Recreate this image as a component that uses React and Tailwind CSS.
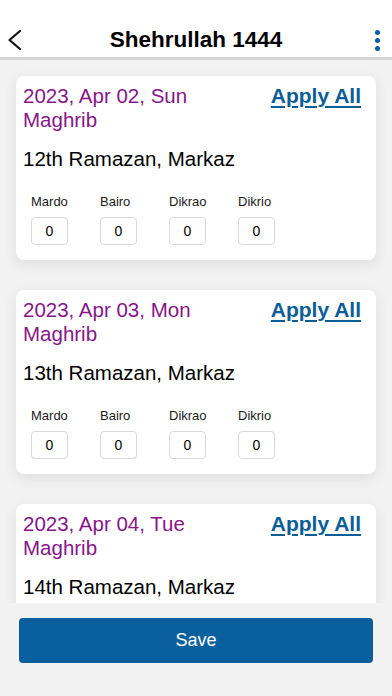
const days = [
  { date: "2023, Apr 02, Sun", hijri: "12th Ramazan, Markaz" },
  { date: "2023, Apr 03, Mon", hijri: "13th Ramazan, Markaz" },
  { date: "2023, Apr 04, Tue", hijri: "14th Ramazan, Markaz" },
];

const fields = ["Mardo", "Bairo", "Dikrao", "Dikrio"];

const DayCard = ({ day }) => {
  return (
    <div className="shrink-0 bg-white rounded-[8px] shadow-[0_4px_14px_rgba(0,0,0,0.09)] pl-[7px] pr-[15px] pt-[8px] pb-[15px]">
      <div className="flex justify-between items-start">
        <p className="text-[20.5px] leading-[24px] text-[#87168a] w-[200px]">
          {day.date}
          <br />
          Maghrib
        </p>
        <button className="text-[21px] leading-[24px] font-bold text-[#0b5d98] underline decoration-2 underline-offset-[3px]">
          Apply All
        </button>
      </div>
      <p className="mt-[15px] text-[20.5px] leading-[24px] text-black">{day.hijri}</p>
      <div className="mt-[23px] pl-[8px] flex">
        {fields.map((f) => (
          <div key={f} className="w-[69px] flex flex-col">
            <label className="text-[13px] leading-[16px] text-[#1a1a1a]">{f}</label>
            <input
              className="mt-[7px] w-[37px] h-[28px] border border-[#d9d9d9] rounded-[4px] text-center text-[14px] text-black outline-none"
              type="text"
              defaultValue="0"
            />
          </div>
        ))}
      </div>
    </div>
  );
};

const App = () => {
  return (
    <div
      className="h-[696px] w-[392px] flex flex-col bg-[#f2f2f2] overflow-hidden"
      style={{ fontFamily: '"Liberation Sans", Arial, sans-serif' }}
    >
      <div className="h-[60px] shrink-0 bg-white border-b-[3px] border-[#d5d5d5] pt-[23px] grid grid-cols-[48px_1fr_48px] items-center">
        <button className="pl-[7px] h-[34px] flex items-center">
          <svg width="15" height="22" viewBox="0 0 15 22" fill="none">
            <polyline
              points="13,2 2.5,11 13,20"
              stroke="#111"
              strokeWidth="2.2"
              strokeLinecap="round"
              strokeLinejoin="round"
            />
          </svg>
        </button>
        <h1 className="text-center text-[22.5px] font-bold text-black leading-[34px]">
          Shehrullah 1444
        </h1>
        <button className="h-[34px] flex flex-col items-end justify-center gap-[3px] pr-[12px]">
          <span className="w-[5px] h-[5px] rounded-full bg-[#0b5d9e]" />
          <span className="w-[5px] h-[5px] rounded-full bg-[#0b5d9e]" />
          <span className="w-[5px] h-[5px] rounded-full bg-[#0b5d9e]" />
        </button>
      </div>

      <div className="flex-1 overflow-hidden px-[16px] pt-[16px] flex flex-col gap-[30px]">
        {days.map((d) => (
          <DayCard key={d.date} day={d} />
        ))}
      </div>

      <div className="shrink-0 h-[93px] px-[19px] pt-[15px]">
        <button className="w-full h-[45px] rounded-[4px] bg-[#0a5f9e] text-white text-[18px]">
          Save
        </button>
      </div>
    </div>
  );
};

export default App;
